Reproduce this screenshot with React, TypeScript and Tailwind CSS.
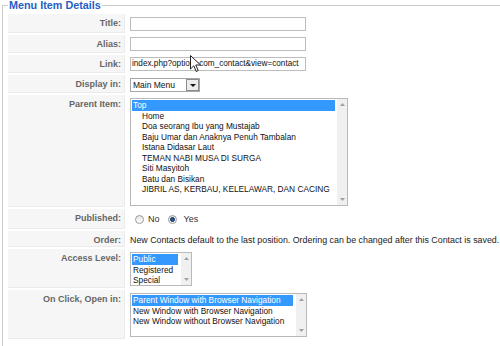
import React from 'react';

const font = { fontFamily: '"Liberation Sans", Arial, sans-serif' };

const parentItems = [
    'Top',
    'Home',
    'Doa seorang Ibu yang Mustajab',
    'Baju Umar dan Anaknya Penuh Tambalan',
    'Istana Didasar Laut',
    'TEMAN NABI MUSA DI SURGA',
    'Siti Masyitoh',
    'Batu dan Bisikan',
    'JIBRIL AS, KERBAU, KELELAWAR, DAN CACING',
];

const accessItems = ['Public', 'Registered', 'Special'];

const openItems = [
    'Parent Window with Browser Navigation',
    'New Window with Browser Navigation',
    'New Window without Browser Navigation',
];

const Label: React.FC<{ text: string }> = ({ text }) => (
    <div className="w-[117px] shrink-0 bg-[#f6f6f6] border-b border-r border-[#ebebeb] text-right pr-[3px] pt-[4px] font-bold text-[#666] text-[9px] leading-[11px]">
        {text}
    </div>
);

const ScrollBar: React.FC = () => (
    <div className="w-[10px] shrink-0 bg-[#f0f0f0] flex flex-col justify-between items-center py-[4px]">
        <svg width="5" height="3" viewBox="0 0 5 3"><path d="M0 3 L2.5 0 L5 3 Z" fill="#a0a0a0" /></svg>
        <svg width="5" height="3" viewBox="0 0 5 3"><path d="M0 0 L2.5 3 L5 0 Z" fill="#a0a0a0" /></svg>
    </div>
);

interface ListBoxProps {
    items: string[];
    width: string;
    height: string;
    hlWidth: string;
    indent?: boolean;
}

const ListBox: React.FC<ListBoxProps> = ({ items, width, height, hlWidth, indent }) => (
    <div className={`flex border border-[#b9b9b9] bg-white ${width} ${height}`}>
        <div className="flex-1 pt-[1px] pl-[1px] text-[8.3px] leading-[10.5px] text-[#111]">
            {items.map((it, i) => (
                <div
                    key={it}
                    className={`whitespace-nowrap h-[10.5px] ${i === 0 ? `bg-[#3399ff] text-white ${hlWidth}` : ''} ${indent && i > 0 ? 'pl-[10px]' : 'pl-[1px]'}`}
                >
                    {it}
                </div>
            ))}
        </div>
        <ScrollBar />
    </div>
);

const Radio: React.FC<{ checked?: boolean }> = ({ checked }) => (
    <span className="w-[9px] h-[9px] rounded-full border border-[#9a9a9a] bg-gradient-to-b from-[#e6e6e6] to-white flex items-center justify-center">
        {checked && <span className="w-[5px] h-[5px] rounded-full bg-[#1e5d9c] border border-[#0c2f55]" />}
    </span>
);

export default function App() {
    return (
        <div className="relative w-[500px] h-[346px] overflow-hidden bg-white" style={font}>
            <fieldset className="ml-[2px] w-[530px] border border-[#cccccc] pl-[5px] pt-[3px] pb-[40px]">
                <legend className="px-[1px] text-[10.8px] leading-[11px] font-bold text-[#1f5fc6]">Menu Item Details</legend>
                <div className="flex flex-col gap-[2px] text-[8.5px] leading-[11px]">
                    <div className="flex gap-[5px] h-[19px]">
                        <Label text="Title:" />
                        <div className="pt-[3px]">
                            <div className="w-[176px] h-[14px] border border-[#bdbdbd] bg-white" />
                        </div>
                    </div>
                    <div className="flex gap-[5px] h-[18px]">
                        <Label text="Alias:" />
                        <div className="pt-[2px]">
                            <div className="w-[176px] h-[14px] border border-[#bdbdbd] bg-white" />
                        </div>
                    </div>
                    <div className="flex gap-[5px] h-[18px]">
                        <Label text="Link:" />
                        <div className="pt-[2px]">
                            <div className="w-[176px] h-[14px] border border-[#bdbdbd] bg-white pl-[1px] text-[8.2px] leading-[12px] text-[#111] whitespace-nowrap overflow-hidden">
                                index.php?option=com_contact&amp;view=contact
                            </div>
                        </div>
                    </div>
                    <div className="flex gap-[5px] h-[18px]">
                        <Label text="Display in:" />
                        <div className="pt-[3px]">
                            <div className="w-[70px] h-[14px] border border-[#a6a6a6] bg-white flex items-center justify-between">
                                <span className="pl-[2px] text-[8.5px] text-[#111]">Main Menu</span>
                                <span className="w-[13px] h-[12px] border border-[#8c8c8c] bg-[#ececec] flex items-center justify-center">
                                    <svg width="6" height="3" viewBox="0 0 6 3"><path d="M0 0 L3 3 L6 0 Z" fill="#111" /></svg>
                                </span>
                            </div>
                        </div>
                    </div>
                    <div className="flex gap-[5px] h-[112px]">
                        <Label text="Parent Item:" />
                        <div className="pt-[3px]">
                            <ListBox items={parentItems} width="w-[218px]" height="h-[108px]" hlWidth="w-[203px]" indent />
                        </div>
                    </div>
                    <div className="flex gap-[5px] h-[20px]">
                        <Label text="Published:" />
                        <div className="pt-[4px] pl-[5px] flex items-center gap-[4px] h-[17px] text-[#333] text-[9px]">
                            <Radio />
                            <span className="mr-[4px]">No</span>
                            <Radio checked />
                            <span className="ml-[3px]">Yes</span>
                        </div>
                    </div>
                    <div className="flex gap-[5px] h-[16px]">
                        <Label text="Order:" />
                        <div className="pt-[4px] text-[#222] text-[8.85px] whitespace-nowrap">
                            New Contacts default to the last position. Ordering can be changed after this Contact is saved.
                        </div>
                    </div>
                    <div className="flex gap-[5px] h-[39px]">
                        <Label text="Access Level:" />
                        <div className="pt-[3px]">
                            <ListBox items={accessItems} width="w-[62px]" height="h-[34px]" hlWidth="w-[46px]" />
                        </div>
                    </div>
                    <div className="flex gap-[5px] h-[49px]">
                        <Label text="On Click, Open in:" />
                        <div className="pt-[3px]">
                            <ListBox items={openItems} width="w-[177px]" height="h-[44px]" hlWidth="w-[161px]" />
                        </div>
                    </div>
                </div>
            </fieldset>
            <svg className="absolute left-[190px] top-[55px]" width="12" height="18" viewBox="0 0 12 18">
                <path d="M0.5 0.5 L0.5 14 L3.8 10.8 L6.2 16.5 L8.2 15.6 L5.8 10 L10.5 10 Z" fill="white" stroke="#222" strokeWidth="1" strokeLinejoin="round" />
            </svg>
        </div>
    );
}
